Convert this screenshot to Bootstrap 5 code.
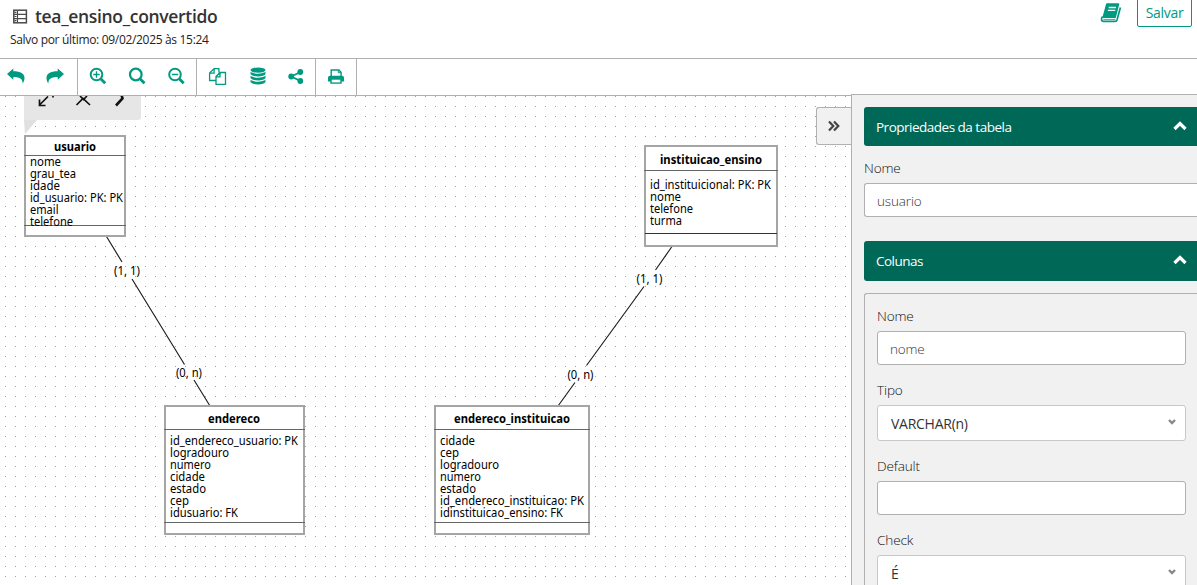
<!DOCTYPE html>
<html lang="pt-BR">
<head>
<meta charset="utf-8">
<meta name="viewport" content="width=device-width, initial-scale=1">
<title>tea_ensino_convertido</title>
<link href="https://cdn.jsdelivr.net/npm/bootstrap@5.3.0/dist/css/bootstrap.min.css" rel="stylesheet">
<style>
  :root { --brand: #009a80; --brand-dark: #006857; --line: #b0b0b0; }
  body { font-family: "Open Sans", "Noto Sans", sans-serif; font-size: 14px; color: #333; background: #fff; }
  .topbar { height: 58px; padding-left: 10px; }
  .model-title { font-size: 17.5px; font-weight: 600; line-height: 22px; letter-spacing: -.33px; color: #333; margin: 5px 0 0; gap: 7px; padding-left: 2px; }
  .saved-at { font-size: 12px; font-weight: 400; line-height: 16px; margin-top: 5px; letter-spacing: -.32px; color: #222; }
  .btn-save { height: 29px; width: 55px; margin: -2px 5px 0 0; padding: 0; border: 1px solid var(--brand); border-radius: 2px; color: var(--brand); font-size: 14px; line-height: 27px; letter-spacing: -.3px; }
  .book-icon { margin: 3px 15px 0 0; color: var(--brand); }
  .toolbar { height: 38px; border-top: 1px solid var(--line); border-bottom: 1px solid var(--line); color: var(--brand); }
  .tool-group { border-right: 1px solid var(--line); }
  .tool { width: 39.6px; height: 36px; padding: 0 0 2px; border: 0; background: none; color: inherit; display: flex; align-items: center; justify-content: center; }
  .tool svg { display: block; }
  .diagram { display: block; }
  .diagram text { font-family: "Noto Sans", "Open Sans", sans-serif; font-size: 11.8px; fill: #000; }
  .diagram .entity-name { font-weight: 700; font-size: 12px; }
  .side-panel { width: 346px; height: 491px; margin-top: -2px; background: #f1f1f1; border: 1px solid var(--line); border-width: 1px 0 0 1px; padding: 12px 0 0 12px; position: relative; }
  .collapse-tab { position: absolute; left: -36px; top: 12px; width: 35px; height: 38px; padding: 0; background: #f1f1f1; border: 1px solid var(--line); border-right: 0; border-radius: 3px 0 0 3px; color: #444; display: flex; align-items: center; justify-content: center; }
  .section-head { background: var(--brand-dark); color: #fff; height: 39px; padding: 1px 10px 0 12px; border-radius: 3px 0 0 3px; letter-spacing: -.5px; font-size: 13.5px; }
  .section-head svg { margin-top: -3px; }
  .field-label { font-weight: 300; line-height: 20px; height: 20px; letter-spacing: -.15px; font-size: 13.6px; color: #111; }
  .form-control.field, .form-select.field { border: 1px solid var(--line); border-radius: 3px; height: 34px; padding: 1px 12px 0; font-size: 13.5px; font-weight: 300; letter-spacing: -.15px; color: #333; }
  .form-select.field { height: 36px; padding: 0 13px; border-color: #c8c8c8; font-size: 14px; font-weight: 400; color: #333; letter-spacing: -.26px; background: #fff; }
  .select-wrap { position: relative; }
  .select-wrap svg { position: absolute; right: 10px; top: 14px; }
  .column-box { border: 1px solid var(--line); border-width: 1px 0 0 1px; border-radius: 3px 0 0 0; margin-top: 12px; padding: 12px 11px 0 12px; height: 300px; }
</style>
</head>
<body class="overflow-hidden vh-100">
<header class="topbar d-flex justify-content-between align-items-start">
  <div>
    <h1 class="model-title d-flex align-items-center">
      <svg width="16" height="15" viewBox="0 0 16 15" fill="none" stroke="#4a4a4a"><rect x="1.800" y="1.200" width="12.600" height="12.600" stroke-width="1.500"/><path d="M1 5.400h14M1 9.600h14M5.500 1v12.500" stroke-width="1.100"/><path d="M2.500 3.300h2M2.500 7.500h2M2.500 11.700h2" stroke-width="1.200"/></svg>
      <span>tea_ensino_convertido</span>
    </h1>
    <div class="saved-at">Salvo por último: 09/02/2025 às 15:24</div>
  </div>
  <div class="d-flex align-items-start">
    <svg class="book-icon" width="22" height="20" viewBox="0 0 22 20" fill="none" stroke="currentColor"><path d="M6.900 1H18.500L15.100 14.200H3.300Z" fill="currentColor" stroke-linejoin="round" stroke-width="1.600"/><path d="M2.600 13.500C.9 15.800 1.300 18.300 3.300 18.300H15.300Q16.600 18.300 17 17L20.400 4.500" stroke-width="1.700"/><path d="M3.300 16.400H15.400" stroke-width=".8"/><path d="M8.700 4.500h7.300M7.900 7.400h7.300" stroke="#fff" stroke-width="1.300"/></svg>
    <button class="btn btn-save">Salvar</button>
  </div>
</header>

<div class="toolbar d-flex">
  <div class="tool-group d-flex" style="width:78px">
    <button class="tool" aria-label="Desfazer" style="width:33px"><svg width="18" height="16" viewBox="0 0 18 16" fill="currentColor"><path d="M0 6 6.300 .4V3.200C13.500 3.200 17.800 5.500 17.500 10.500C17.300 13 16.200 14.800 15.600 15.600C15.700 11 13.500 8.900 6.300 8.900V11.700Z"/></svg></button>
    <button class="tool" aria-label="Refazer" style="width:46px"><svg width="18" height="16" viewBox="0 0 18 16" fill="currentColor"><path d="M18 6 11.700 .4V3.200C4.500 3.200 .2 5.500 .5 10.500C.7 13 1.800 14.800 2.400 15.600C2.300 11 4.500 8.900 11.700 8.900V11.700Z"/></svg></button>
  </div>
  <div class="tool-group d-flex" style="width:119px">
    <button class="tool" aria-label="Aumentar zoom"><svg width="18" height="18" viewBox="0 0 18 18" fill="none" stroke="currentColor"><circle cx="7.500" cy="7.500" r="5.800" stroke-width="2"/><path d="m11.700 11.700 4.500 4.500" stroke-width="2.800"/><path d="M7.500 4.300v6.400M4.300 7.500h6.400" stroke-width="1.300"/></svg></button>
    <button class="tool" aria-label="Zoom original"><svg width="18" height="18" viewBox="0 0 18 18" fill="none" stroke="currentColor"><circle cx="7.800" cy="7.500" r="5.800" stroke-width="2.200"/><path d="m12 11.700 4.500 4.500" stroke-width="2.800"/></svg></button>
    <button class="tool" aria-label="Diminuir zoom"><svg width="18" height="18" viewBox="0 0 18 18" fill="none" stroke="currentColor"><circle cx="8" cy="7.500" r="5.800" stroke-width="2"/><path d="m12.200 11.700 4.500 4.500" stroke-width="2.800"/><path d="M4.800 7.500h6.400" stroke-width="1.500"/></svg></button>
  </div>
  <div class="tool-group d-flex" style="width:119px">
    <button class="tool" aria-label="Duplicar" style="width:42px"><svg width="19" height="19" viewBox="0 0 19 19" fill="none" stroke="currentColor" stroke-width="1.300"><path d="M8 13.500H1.600V6L6.100 1.600H10.900V5.500M6.100 1.600V6.200H1.600"/><path d="M8 9.500 12 5.500H17.500V17.400H8ZM12 5.500V9.900H8"/></svg></button>
    <button class="tool" aria-label="Banco de dados" style="width:39px"><svg width="16" height="18" viewBox="0 0 16 18" fill="currentColor"><ellipse cx="8" cy="3.100" rx="7.500" ry="2.600"/><path d="M.5 5Q8 8.600 15.500 5V7.100Q14 9.400 8 9.400T.5 7.100ZM.5 9Q8 12.600 15.500 9V11.100Q14 13.400 8 13.400T.5 11.100ZM.5 13Q8 16.600 15.500 13V15.100Q14 17.400 8 17.400T.5 15.100Z"/></svg></button>
    <button class="tool" aria-label="Compartilhar" style="width:38px"><svg width="16" height="15" viewBox="0 0 16 15" fill="currentColor" stroke="currentColor"><path d="M12.500 3 3.300 7.500 12.500 12" fill="none" stroke-width="1.800"/><circle cx="3.200" cy="7.500" r="2.900" stroke="none"/><circle cx="12.300" cy="3" r="2.900" stroke="none"/><circle cx="12.300" cy="12" r="2.900" stroke="none"/></svg></button>
  </div>
  <div class="tool-group d-flex" style="width:41px">
    <button class="tool" aria-label="Imprimir"><svg width="16" height="15" viewBox="0 0 16 15"><path d="M3.200 7V1h7.600l2.300 2.300V7" fill="none" stroke="currentColor" stroke-width="1.400"/><path d="M10.300 1v2.700h2.700" fill="none" stroke="currentColor"/><path d="M0 12.500V8.700Q0 6.700 2 6.700H14Q16 6.700 16 8.700V12.500H13.700V14.700H2.300V12.500Z" fill="currentColor"/><path d="M3.700 10.700h8.600v2.700H3.700Z" fill="#fff"/></svg></button>
  </div>
</div>

<main class="d-flex">
  <svg class="diagram flex-shrink-0" width="851" height="489" viewBox="0 96 851 489">
    <defs>
      <pattern id="dots" width="10" height="10" patternUnits="userSpaceOnUse"><rect x="5" y="6" width="1" height="1" fill="#a0a0a0"/></pattern>
    </defs>
    <rect y="96" width="851" height="489" fill="url(#dots)"/>

    <!-- floating action menu of the selected table -->
    <path d="M24 90H141V117Q141 120 138 120H24Z" fill="#e6e6e6"/>
    <path d="M24 120H37L25 134Z" fill="#e0e0e0"/>
    <g fill="none" stroke="#111">
      <path d="M39.500 105 48 96.500M39.500 99.500V105.500H45.500M53 96v1.500" stroke-width="1.700"/>
      <path d="M76.500 105 83 98.500 90 105M80 96 83.500 99.500 87 96" stroke-width="1.700"/>
      <path d="M116 105.500 122.500 98.500 121.500 95" stroke-width="2.600"/>
    </g>

    <!-- relationships -->
    <g stroke="#222" stroke-width="1.200">
      <path d="M106.500 236.500 122 262M132 279 184.500 364.500M194 380 210 406M672 246.500 655.500 270M644 286.500 586.500 365.500M575 382.500 558 406"/>
    </g>
    <g>
      <text x="114" y="275" textLength="26" lengthAdjust="spacingAndGlyphs">(1, 1)</text>
      <text x="176" y="377" textLength="26" lengthAdjust="spacingAndGlyphs">(0, n)</text>
      <text x="636.500" y="283" textLength="26" lengthAdjust="spacingAndGlyphs">(1, 1)</text>
      <text x="567.500" y="379" textLength="26" lengthAdjust="spacingAndGlyphs">(0, n)</text>
    </g>

    <!-- tables -->
    <g fill="#fff" stroke="#a5a5a5" stroke-width="2">
      <rect x="25" y="136" width="100" height="100"/>
      <rect x="645" y="146" width="132" height="100"/>
      <rect x="165" y="406" width="139" height="128"/>
      <rect x="435" y="406" width="154" height="128"/>
    </g>
    <g stroke="#666" shape-rendering="crispEdges">
      <path d="M24 155.500H126M24 225.500H126M644 170.500H778M164 429.500H305M164 522.500H305M434 429.500H590M434 522.500H590"/>
      <path d="M645 233.500H777" stroke="#333"/>
    </g>
    <g>
      <text class="entity-name" x="54" y="151" textLength="42" lengthAdjust="spacingAndGlyphs">usuario</text>
      <text x="30" y="166" textLength="31" lengthAdjust="spacingAndGlyphs">nome</text>
      <text x="30" y="178" textLength="46" lengthAdjust="spacingAndGlyphs">grau_tea</text>
      <text x="30" y="190" textLength="30" lengthAdjust="spacingAndGlyphs">idade</text>
      <text x="30" y="202" textLength="93" lengthAdjust="spacingAndGlyphs">id_usuario: PK: PK</text>
      <text x="30" y="214" textLength="28.500" lengthAdjust="spacingAndGlyphs">email</text>
      <text x="30" y="226" textLength="43" lengthAdjust="spacingAndGlyphs">telefone</text>

      <text class="entity-name" x="660" y="164" textLength="102" lengthAdjust="spacingAndGlyphs">instituicao_ensino</text>
      <text x="650" y="189" textLength="121" lengthAdjust="spacingAndGlyphs">id_instituicional: PK: PK</text>
      <text x="650" y="201" textLength="31" lengthAdjust="spacingAndGlyphs">nome</text>
      <text x="650" y="213" textLength="43" lengthAdjust="spacingAndGlyphs">telefone</text>
      <text x="650" y="225" textLength="32" lengthAdjust="spacingAndGlyphs">turma</text>

      <text class="entity-name" x="208" y="423" textLength="52" lengthAdjust="spacingAndGlyphs">endereco</text>
      <text x="170" y="445" textLength="128" lengthAdjust="spacingAndGlyphs">id_endereco_usuario: PK</text>
      <text x="170" y="457" textLength="59" lengthAdjust="spacingAndGlyphs">logradouro</text>
      <text x="170" y="469" textLength="41" lengthAdjust="spacingAndGlyphs">numero</text>
      <text x="170" y="481" textLength="35" lengthAdjust="spacingAndGlyphs">cidade</text>
      <text x="170" y="493" textLength="36" lengthAdjust="spacingAndGlyphs">estado</text>
      <text x="170" y="505" textLength="19" lengthAdjust="spacingAndGlyphs">cep</text>
      <text x="170" y="517" textLength="68" lengthAdjust="spacingAndGlyphs">idusuario: FK</text>

      <text class="entity-name" x="454" y="423" textLength="116" lengthAdjust="spacingAndGlyphs">endereco_instituicao</text>
      <text x="440" y="445" textLength="35" lengthAdjust="spacingAndGlyphs">cidade</text>
      <text x="440" y="457" textLength="19" lengthAdjust="spacingAndGlyphs">cep</text>
      <text x="440" y="469" textLength="59" lengthAdjust="spacingAndGlyphs">logradouro</text>
      <text x="440" y="481" textLength="41" lengthAdjust="spacingAndGlyphs">numero</text>
      <text x="440" y="493" textLength="36" lengthAdjust="spacingAndGlyphs">estado</text>
      <text x="440" y="505" textLength="144" lengthAdjust="spacingAndGlyphs">id_endereco_instituicao: PK</text>
      <text x="440" y="517" textLength="123" lengthAdjust="spacingAndGlyphs">idinstituicao_ensino: FK</text>
    </g>
  </svg>

  <aside class="side-panel flex-shrink-0">
    <button class="collapse-tab" aria-label="Recolher painel"><svg width="12" height="12" viewBox="0 0 12 12" fill="none" stroke="currentColor" stroke-width="2.200"><path d="m1 1.500 4.300 4.500L1 10.500M6 1.500 10.300 6 6 10.500"/></svg></button>
    <div class="section-head d-flex align-items-center justify-content-between"><span>Propriedades da tabela</span>
      <svg width="14" height="10" viewBox="0 0 14 10" fill="none" stroke="#fff" stroke-width="3.200"><path d="M1.500 8 7 2.500 12.500 8"/></svg></div>
    <div class="field-label" style="margin:12px 0 5px">Nome</div>
    <input class="form-control field rounded-end-0 border-end-0" value="usuario">
    <div class="section-head d-flex align-items-center justify-content-between" style="margin-top:24px;height:40px"><span>Colunas</span>
      <svg width="14" height="10" viewBox="0 0 14 10" fill="none" stroke="#fff" stroke-width="3.200"><path d="M1.500 8 7 2.500 12.500 8"/></svg></div>
    <div class="column-box">
      <div class="field-label">Nome</div>
      <input class="form-control field" value="nome" style="margin-top:5px">
      <div class="field-label" style="margin:15px 0 5px">Tipo</div>
      <div class="select-wrap"><select class="form-select field"><option>VARCHAR(n)</option></select>
        <svg width="8" height="6" viewBox="0 0 8 6" fill="none" stroke="#888" stroke-width="2.400"><path d="M1 1 4 4 7 1"/></svg></div>
      <div class="field-label" style="margin:15px 0 5px">Default</div>
      <input class="form-control field">
      <div class="field-label" style="margin:15px 0 5px">Check</div>
      <div class="select-wrap"><select class="form-select field"><option>É</option></select>
        <svg width="8" height="6" viewBox="0 0 8 6" fill="none" stroke="#888" stroke-width="2.400"><path d="M1 1 4 4 7 1"/></svg></div>
    </div>
  </aside>
</main>
<script src="https://cdn.jsdelivr.net/npm/bootstrap@5.3.0/dist/js/bootstrap.bundle.min.js"></script>
</body>
</html>
